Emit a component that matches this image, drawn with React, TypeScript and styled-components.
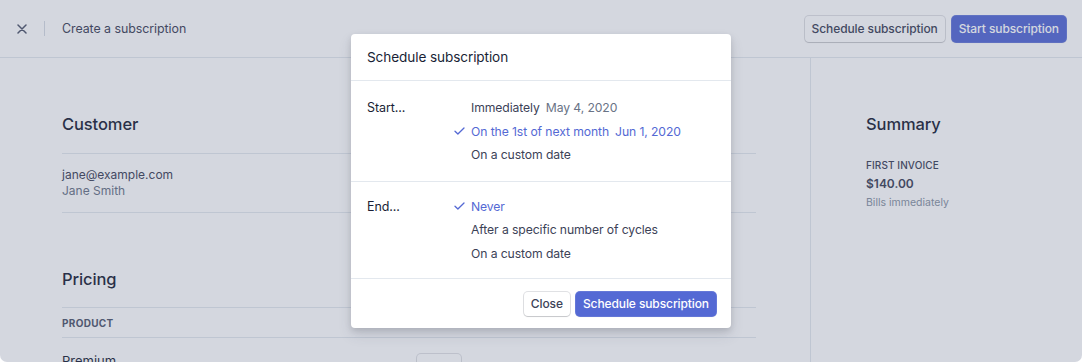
import React from "react";
import styled, { createGlobalStyle } from "styled-components";

const GlobalStyle = createGlobalStyle`
  html, body { margin: 0; padding: 0; background: #ffffff; }
  body {
    font-family: Inter, "Noto Sans", "Liberation Sans", sans-serif;
    -webkit-font-smoothing: antialiased;
  }
  * { box-sizing: border-box; }
`;

const Frame = styled.div`
  position: relative;
  width: 1082px;
  height: 362px;
  overflow: hidden;
  background: #ffffff;
  border-radius: 0 0 7px 7px;
  color: #1a1f36;
`;

const Header = styled.header`
  height: 58px;
  display: flex;
  align-items: center;
  justify-content: space-between;
  padding: 0 16px 0 17px;
  border-bottom: 1px solid #e3e8ee;
`;

const HeaderLeft = styled.div`
  display: flex;
  align-items: center;
`;

const IconButton = styled.button`
  width: 10px;
  height: 10px;
  padding: 0;
  border: 0;
  background: none;
  display: flex;
  align-items: center;
  justify-content: center;
  color: #4f566b;
`;

const VDivider = styled.span`
  width: 1px;
  height: 15px;
  background: #d6dbe3;
  margin: 0 17px 0 17px;
`;

const PageTitle = styled.span`
  font-size: 12.4px;
  color: #3c4257;
  letter-spacing: -0.05px;
`;

const HeaderActions = styled.div`
  display: flex;
  gap: 7px;
`;

const Button = styled.button<{ $primary?: boolean; $h?: number }>`
  height: ${(p) => p.$h ?? 26}px;
  padding: 0 7px;
  border-radius: 4px;
  font-family: inherit;
  font-size: 12px;
  font-weight: 500;
  letter-spacing: -0.1px;
  cursor: pointer;
  border: 0;
  color: ${(p) => (p.$primary ? "#ffffff" : "#3c4257")};
  background: ${(p) => (p.$primary ? "#5469d4" : "#ffffff")};
  box-shadow: ${(p) =>
    p.$primary
      ? "0 0 0 1px rgba(84,105,212,0.9), 0 1px 1px rgba(0,0,0,0.12)"
      : "0 0 0 1px rgba(60,66,87,0.16), 0 1px 1px rgba(0,0,0,0.12)"};
`;

const Body = styled.div`
  display: flex;
  height: 304px;
`;

const Main = styled.main`
  flex: 1;
  padding: 54px 54px 0 62px;
  border-right: 1px solid #e3e8ee;
`;

const Sidebar = styled.aside`
  width: 271px;
  padding: 54px 20px 0 55px;
`;

const Heading = styled.h2`
  margin: 0;
  font-size: 16.5px;
  line-height: 24px;
  font-weight: 500;
  color: #1a1f36;
  letter-spacing: -0.1px;
`;

const Section = styled.section<{ $top?: number }>`
  margin-top: ${(p) => p.$top ?? 0}px;
`;

const SectionHead = styled.div<{ $pb?: number }>`
  padding-bottom: ${(p) => p.$pb ?? 16}px;
  border-bottom: 1px solid #e3e8ee;
`;

const CustomerRow = styled.div`
  padding: 13px 0 13px;
  border-bottom: 1px solid #e3e8ee;
  display: flex;
  flex-direction: column;
`;

const Line = styled.span<{ $muted?: boolean }>`
  font-size: 12px;
  line-height: 16px;
  color: ${(p) => (p.$muted ? "#697386" : "#3c4257")};
`;

const TableHead = styled.div`
  height: 30px;
  display: flex;
  align-items: center;
  border-bottom: 1px solid #e3e8ee;
  font-size: 10px;
  font-weight: 700;
  letter-spacing: 0.3px;
  color: #4f566b;
  text-transform: uppercase;
`;

const TableRow = styled.div`
  display: flex;
  align-items: flex-start;
  padding-top: 15px;
  font-size: 13px;
  color: #1a1f36;
`;

const ProductCell = styled.span`
  width: 355px;
`;

const QtyInput = styled.div`
  width: 44px;
  height: 28px;
  margin-top: 1px;
  border-radius: 4px;
  background: #fff;
  box-shadow: 0 0 0 1px rgba(60,66,87,0.16), 0 1px 1px rgba(0,0,0,0.08);
`;

const SummaryBlock = styled.div`
  margin-top: 21px;
  display: flex;
  flex-direction: column;
  gap: 3px;
`;

const Eyebrow = styled.span`
  font-size: 10px;
  line-height: 16px;
  font-weight: 500;
  color: #3c4257;
  text-transform: uppercase;
  letter-spacing: 0.1px;
`;

const Amount = styled.span`
  font-size: 12px;
  line-height: 16px;
  font-weight: 600;
  color: #3c4257;
`;

const Hint = styled.span`
  font-size: 10.5px;
  line-height: 16px;
  color: #8792a2;
`;

const Overlay = styled.div`
  position: absolute;
  inset: 0;
  background: rgba(82, 95, 127, 0.25);
  display: flex;
  justify-content: center;
  align-items: flex-start;
  padding-top: 34px;
`;

const Modal = styled.div`
  width: 380px;
  background: #ffffff;
  border-radius: 4px;
  box-shadow: 0 7px 14px rgba(60, 66, 87, 0.12), 0 3px 6px rgba(0, 0, 0, 0.12);
  overflow: hidden;
`;

const ModalHeader = styled.div`
  height: 47px;
  padding: 0 16px;
  display: flex;
  align-items: center;
  border-bottom: 1px solid #e3e8ee;
  font-size: 13.6px;
  color: #1a1f36;
  letter-spacing: -0.1px;
`;

const ModalSection = styled.div<{ $pt: number; $pb: number }>`
  display: grid;
  grid-template-columns: 84px 20px 1fr;
  grid-auto-rows: 23.5px;
  padding: ${(p) => p.$pt}px 16px ${(p) => p.$pb}px;
  border-bottom: 1px solid #e3e8ee;
`;

const FieldLabel = styled.span`
  grid-column: 1;
  grid-row: 1;
  font-size: 12.5px;
  line-height: 23.5px;
  color: #1a1f36;
  letter-spacing: -0.1px;
`;

const CheckCell = styled.span<{ $row: number }>`
  grid-column: 2;
  grid-row: ${(p) => p.$row};
  display: flex;
  align-items: center;
  padding-left: 3px;
  color: #5469d4;
`;

const Option = styled.span<{ $row: number; $active?: boolean }>`
  grid-column: 3;
  grid-row: ${(p) => p.$row};
  font-size: 12.2px;
  line-height: 23.5px;
  color: ${(p) => (p.$active ? "#5469d4" : "#3c4257")};
  letter-spacing: -0.1px;
`;

const OptionDate = styled.span<{ $active?: boolean }>`
  margin-left: 6px;
  color: ${(p) => (p.$active ? "#5469d4" : "#697386")};
`;

const ModalFooter = styled.div`
  height: 49px;
  display: flex;
  align-items: center;
  justify-content: flex-end;
  gap: 6px;
  padding: 0 15px;
`;

const CloseX = () => (
  <svg width="10" height="10" viewBox="0 0 10 10" fill="none">
    <path d="M1 1L9 9M9 1L1 9" stroke="currentColor" strokeWidth="1.5" strokeLinecap="round" />
  </svg>
);

const Check = () => (
  <svg width="11" height="8" viewBox="0 0 11 8" fill="none">
    <path d="M1 4.2L3.9 7L10 1" stroke="currentColor" strokeWidth="1.3" strokeLinecap="round" strokeLinejoin="round" />
  </svg>
);

export default function App() {
  return (
    <>
      <GlobalStyle />
      <Frame>
        <Header>
          <HeaderLeft>
            <IconButton aria-label="Close">
              <CloseX />
            </IconButton>
            <VDivider />
            <PageTitle>Create a subscription</PageTitle>
          </HeaderLeft>
          <HeaderActions>
            <Button>Schedule subscription</Button>
            <Button $primary>Start subscription</Button>
          </HeaderActions>
        </Header>
        <Body>
          <Main>
            <Section>
              <SectionHead $pb={17}>
                <Heading>Customer</Heading>
              </SectionHead>
              <CustomerRow>
                <Line>jane@example.com</Line>
                <Line $muted>Jane Smith</Line>
              </CustomerRow>
            </Section>
            <Section $top={54}>
              <SectionHead>
                <Heading>Pricing</Heading>
              </SectionHead>
              <TableHead>Product</TableHead>
              <TableRow>
                <ProductCell>Premium</ProductCell>
                <QtyInput />
              </TableRow>
            </Section>
          </Main>
          <Sidebar>
            <Heading>Summary</Heading>
            <SummaryBlock>
              <Eyebrow>First invoice</Eyebrow>
              <Amount>$140.00</Amount>
              <Hint>Bills immediately</Hint>
            </SummaryBlock>
          </Sidebar>
        </Body>
        <Overlay>
          <Modal role="dialog">
            <ModalHeader>Schedule subscription</ModalHeader>
            <ModalSection $pt={15} $pb={14}>
              <FieldLabel>Start...</FieldLabel>
              <Option $row={1}>
                Immediately<OptionDate>May 4, 2020</OptionDate>
              </Option>
              <CheckCell $row={2}>
                <Check />
              </CheckCell>
              <Option $row={2} $active>
                On the 1st of next month<OptionDate $active>Jun 1, 2020</OptionDate>
              </Option>
              <Option $row={3}>On a custom date</Option>
            </ModalSection>
            <ModalSection $pt={13} $pb={13}>
              <FieldLabel>End...</FieldLabel>
              <CheckCell $row={1}>
                <Check />
              </CheckCell>
              <Option $row={1} $active>
                Never
              </Option>
              <Option $row={2}>After a specific number of cycles</Option>
              <Option $row={3}>On a custom date</Option>
            </ModalSection>
            <ModalFooter>
              <Button $h={24}>Close</Button>
              <Button $h={24} $primary>
                Schedule subscription
              </Button>
            </ModalFooter>
          </Modal>
        </Overlay>
      </Frame>
    </>
  );
}
